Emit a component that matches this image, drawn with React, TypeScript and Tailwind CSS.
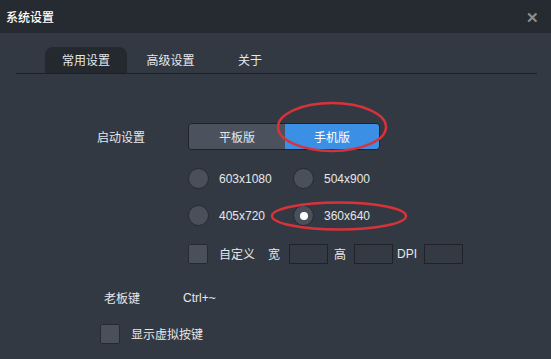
import React from "react";

const font = { fontFamily: '"Noto Sans CJK SC", "Liberation Sans", sans-serif' };

function Radio({ checked }: { checked?: boolean }) {
  return (
    <div className="w-[21px] h-[21px] rounded-full bg-[#4a505a] border border-[#262a30] flex items-center justify-center shrink-0">
      {checked && <div className="w-[8px] h-[8px] rounded-full bg-white" />}
    </div>
  );
}

function Box() {
  return <div className="w-[20px] h-[20px] rounded-[2px] bg-[#4a505a] border border-[#262a30] shrink-0" />;
}

function Input() {
  return <div className="h-[20px] w-[39px] border border-[#1f2329] bg-[#333a44] shrink-0" />;
}

const latin = { fontFamily: '"Liberation Sans", sans-serif' };

export default function App() {
  return (
    <div className="relative w-[551px] h-[359px] bg-[#333943] text-[12px] text-[#e6e8ea] overflow-hidden" style={font}>
      {/* Title bar */}
      <div className="h-[33px] bg-[#262a31] flex items-center justify-between pl-[6px] pr-[12px]">
        <span className="text-[12px] text-white leading-none font-medium">系统设置</span>
        <span className="text-[#8a8f96] text-[15px] leading-none font-bold">✕</span>
      </div>
      {/* Tabs */}
      <div className="pt-[15px] px-[16px]">
        <div className="flex items-end h-[26px] w-[521px] border-b border-[#1d2127]">
          <div className="ml-[29px] w-[82px] h-[26px] rounded-t-[8px] bg-[#242930] flex items-center justify-center">常用设置</div>
          <div className="ml-[19px] w-[49px] h-[26px] flex items-center justify-center">高级设置</div>
          <div className="ml-[43px] h-[26px] flex items-center">关于</div>
        </div>
      </div>
      {/* Content */}
      <div className="pt-[49px]">
        <div className="flex items-center h-[27px]">
          <span className="ml-[97px] w-[91px]">启动设置</span>
          <div className="flex h-[27px] w-[192px] rounded-[4px] border border-[#1f2329] overflow-hidden">
            <div className="w-[96px] bg-[#4b525d] flex items-center justify-center">平板版</div>
            <div className="flex-1 bg-[#3b8fe4] text-white flex items-center justify-center">手机版</div>
          </div>
        </div>
        <div className="ml-[188px] mt-[18px] flex flex-col">
          <div className="flex items-center h-[21px]">
            <Radio />
            <span className="ml-[10px] w-[74px]" style={latin}>603x1080</span>
            <Radio />
            <span className="ml-[10px]" style={latin}>504x900</span>
          </div>
          <div className="flex items-center h-[21px] mt-[16px]">
            <Radio />
            <span className="ml-[10px] w-[74px]" style={latin}>405x720</span>
            <Radio checked />
            <span className="ml-[10px]" style={latin}>360x640</span>
          </div>
          <div className="flex items-center h-[20px] mt-[18px]">
            <Box />
            <span className="ml-[11px] w-[49px]">自定义</span>
            <span className="w-[21px]">宽</span>
            <Input />
            <span className="ml-[6px] w-[20px]">高</span>
            <Input />
            <span className="ml-[4px] w-[27px]" style={latin}>DPI</span>
            <Input />
          </div>
        </div>
        <div className="flex items-center h-[20px] mt-[24px]">
          <span className="ml-[104px] w-[79px]">老板键</span>
          <span style={latin}>Ctrl+~</span>
        </div>
        <div className="flex items-center h-[20px] mt-[16px] ml-[100px]">
          <Box />
          <span className="ml-[11px]">显示虚拟按键</span>
        </div>
      </div>
      {/* Annotations */}
      <svg className="absolute left-0 top-0 pointer-events-none" width="551" height="359">
        <ellipse cx="332" cy="127" rx="54" ry="24" fill="none" stroke="#d8323b" strokeWidth="2.5" />
        <ellipse cx="339" cy="216" rx="67" ry="13.5" fill="none" stroke="#d8323b" strokeWidth="2.5" />
      </svg>
    </div>
  );
}
